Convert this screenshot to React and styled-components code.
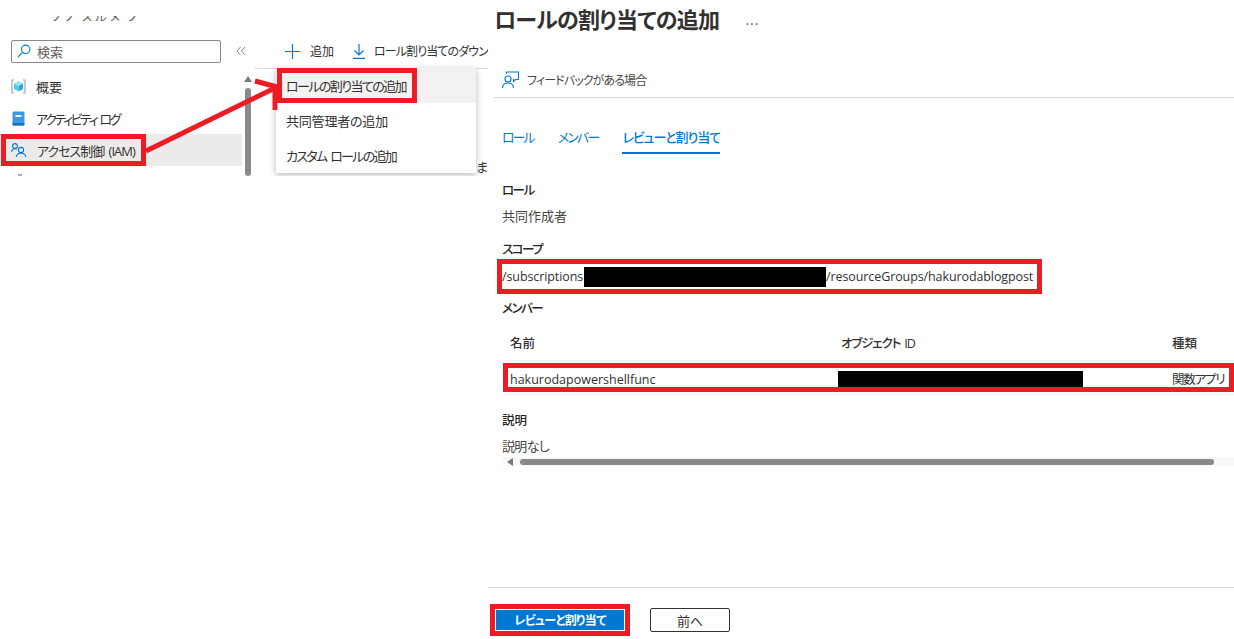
import React from 'react';
import styled, { createGlobalStyle, css } from 'styled-components';

const RED = '#ed1c24';
const BLUE = '#0078d4';

const GlobalStyle = createGlobalStyle`
  html, body {
    margin: 0;
    padding: 0;
    background: #fff;
  }
  body {
    font-family: "Open Sans", "Noto Sans CJK JP", sans-serif;
    font-size: 13px;
    color: #323130;
    font-feature-settings: "palt";
  }
`;

const marked = css`
  ${(p) => p.$marked && `outline: 5px solid ${RED};`}
`;

// the original UI font has narrow kana, so kana heavy labels get squeezed
const tracked = css`
  letter-spacing: ${(p) => p.$ls || 0}px;
  word-spacing: 2px;
`;

const Page = styled.div`
  position: relative;
  display: flex;
  width: 1234px;
  height: 639px;
  overflow: hidden;
  background: #fff;
`;

/* left blade, only its top is visible */
const LeftPane = styled.div`
  position: relative;
  display: flex;
  flex: 0 0 488px;
  height: 176px;
  overflow: hidden;
`;

const Sidebar = styled.div`
  flex: 0 0 254px;
`;

const ClippedTitle = styled.div`
  height: 5px;
  margin: 16px 0 0 50px;
  overflow: hidden;
  color: #605e5c;
  line-height: 5px;
  font-size: 13px;
  white-space: nowrap;

  span {
    display: block;
    margin-top: -9px;
    line-height: 18px;
    letter-spacing: 2px;
  }
`;

const SearchRow = styled.div`
  display: flex;
  align-items: center;
  height: 22px;
  margin: 19px 0 8px 11px;
`;

const SearchBox = styled.div`
  display: flex;
  align-items: center;
  gap: 6px;
  box-sizing: border-box;
  width: 210px;
  height: 23px;
  padding-left: 5px;
  border: 1px solid #8a8886;
  border-radius: 2px;
  color: #605e5c;
`;

const Collapse = styled.span`
  display: flex;
  margin-left: 15px;
`;

const NavArea = styled.div`
  display: flex;
  height: 106px;
  overflow: hidden;
`;

const NavList = styled.div`
  flex: 0 0 242px;
`;

const NavRow = styled.div`
  display: flex;
  align-items: center;
  height: 32px;
  background: ${(p) => (p.$active ? '#edebe9' : 'transparent')};
`;

const NavInner = styled.div`
  display: flex;
  align-items: center;
  gap: 10px;
  height: 22px;
  margin-left: 6px;
  padding: 0 6px 0 5px;
  ${marked}
`;

const NavText = styled.span`
  ${tracked}
`;

const NavStub = styled.div`
  width: 4px;
  height: 2px;
  margin: 8px 0 0 18px;
  background: #b4a0e0;
`;

const ScrollTrack = styled.div`
  display: flex;
  flex-direction: column;
  align-items: center;
  flex: 0 0 12px;
  padding-top: 6px;
`;

const ScrollUp = styled.div`
  width: 0;
  height: 0;
  border-left: 4px solid transparent;
  border-right: 4px solid transparent;
  border-bottom: 6px solid #7a7a7a;
`;

const ScrollThumb = styled.div`
  width: 6px;
  height: 100px;
  margin-top: 6px;
  border-radius: 3px;
  background: #8a8a8a;
`;

const Main = styled.div`
  position: relative;
  flex: 1;
  min-width: 0;
  overflow: hidden;
`;

const Toolbar = styled.div`
  display: flex;
  align-items: center;
  height: 22px;
  margin-top: 40px;
  padding-left: 31px;
  white-space: nowrap;
`;

const ToolItem = styled.div`
  display: flex;
  align-items: center;
  gap: ${(p) => p.$gap || 9}px;
  margin-right: 19px;
  font-size: 12px;
  ${tracked}
`;

const MainBody = styled.div`
  height: 108px;
  margin-top: 6px;
  padding: 88px 0 0 222px;
  border-top: 1px solid #e1dfdd;
  white-space: nowrap;
`;

const Menu = styled.div`
  position: absolute;
  top: 68px;
  left: 22px;
  width: 200px;
  background: #fff;
  box-shadow: 0 2px 7px rgba(0, 0, 0, 0.28);
`;

const MenuItem = styled.div`
  display: flex;
  align-items: center;
  height: 35px;
  padding-left: 6px;
  background: ${(p) => (p.$active ? '#f3f2f1' : '#fff')};
`;

const MenuLabel = styled.span`
  display: flex;
  align-items: center;
  height: 25px;
  padding: 0 6px 0 4px;
  font-size: 13px;
  ${tracked}
  ${marked}
`;

/* right blade */
const RightPane = styled.div`
  display: flex;
  flex-direction: column;
  flex: 1;
  min-width: 0;
  height: 639px;
`;

const TitleRow = styled.div`
  display: flex;
  align-items: center;
  height: 24px;
  margin: 7px 0 0 6px;
`;

const Title = styled.h1`
  margin: 0;
  font-size: 22px;
  font-weight: 600;
  line-height: 24px;
  letter-spacing: -0.7px;
`;

const More = styled.span`
  margin-left: 26px;
  color: #605e5c;
  font-size: 14px;
  letter-spacing: 1px;
`;

const Feedback = styled.div`
  display: flex;
  align-items: center;
  gap: 8px;
  height: 34px;
  margin: 32px 0 0 6px;
  padding-left: 8px;
  border-bottom: 1px solid #d6d6d6;
  font-size: 12px;
  letter-spacing: -0.9px;
  color: #484644;
`;

const Tabs = styled.div`
  display: flex;
  gap: 24px;
  margin: 26px 0 0 14px;
`;

const Tab = styled.div`
  height: 28px;
  line-height: 26px;
  font-size: 13px;
  color: ${BLUE};
  ${tracked}
  ${(p) => p.$active && `border-bottom: 2px solid ${BLUE}; font-weight: 500;`}
`;

const Content = styled.div`
  margin: 25px 0 0 14px;
`;

const Label = styled.div`
  height: 20px;
  margin-top: ${(p) => p.$top || 0}px;
  line-height: 24px;
  font-size: 12.5px;
  font-weight: 500;
  color: #252423;
  ${tracked}
`;

const Value = styled.div`
  height: 20px;
  margin-top: ${(p) => p.$top || 0}px;
  line-height: 21px;
  font-size: 13px;
  color: #484644;
  ${tracked}
`;

const ScopeRow = styled.div`
  display: flex;
  align-items: center;
  width: 535px;
  height: 25px;
  margin-top: 6px;
  font-size: 12.5px;
  letter-spacing: -0.1px;
  white-space: nowrap;
  ${marked}
`;

const Redacted = styled.span`
  display: inline-block;
  flex: none;
  width: ${(p) => p.$w}px;
  height: ${(p) => p.$h}px;
  margin-left: ${(p) => p.$left || 0}px;
  background: #000;
`;

const TableHead = styled.div`
  display: grid;
  grid-template-columns: 331px 331px 1fr;
  align-items: center;
  box-sizing: border-box;
  height: 44px;
  padding: 7px 0 0 8px;
  font-size: 12.5px;
  font-weight: 500;
  white-space: nowrap;
  border-bottom: 1px solid #eeeeee;
`;

const HeadCell = styled.span`
  ${tracked}
`;

const TableBody = styled.div`
  display: flex;
  align-items: center;
  height: 33px;
  border-bottom: 1px solid #eeeeee;
`;

const BodyCells = styled.div`
  display: grid;
  grid-template-columns: 328px 334px 1fr;
  align-items: center;
  box-sizing: border-box;
  width: 721px;
  height: 19px;
  margin: 0 0 0 6px;
  padding-left: 2px;
  font-size: 12.5px;
  line-height: 23px;
  white-space: nowrap;
  ${marked}
`;

const HScroll = styled.div`
  display: flex;
  align-items: center;
  gap: 7px;
  height: 9px;
  margin-top: 1px;
  padding-left: 5px;
  background: #f8f8f8;
`;

const HArrow = styled.div`
  width: 0;
  height: 0;
  border-top: 4px solid transparent;
  border-bottom: 4px solid transparent;
  border-right: 6px solid #7a7a7a;
`;

const HThumb = styled.div`
  width: 694px;
  height: 6px;
  border-radius: 3px;
  background: #8a8a8a;
`;

const Footer = styled.div`
  display: flex;
  align-items: center;
  gap: 25px;
  box-sizing: border-box;
  height: 52px;
  margin-top: auto;
  padding: 13px 0 0 7px;
  border-top: 1px solid #dedede;
`;

const PrimaryButton = styled.button`
  width: 130px;
  height: 22px;
  padding: 0;
  border: 1px solid #fff;
  background: ${BLUE};
  color: #fff;
  font: 600 12px "Open Sans", "Noto Sans CJK JP", sans-serif;
  font-feature-settings: "palt";
  letter-spacing: -0.7px;
  ${marked}
`;

const SecondaryButton = styled.button`
  width: 80px;
  height: 24px;
  padding: 0;
  border: 1px solid #323130;
  border-radius: 2px;
  background: #fff;
  color: #323130;
  font: 400 13px "Open Sans", "Noto Sans CJK JP", sans-serif;
`;

const ArrowLayer = styled.svg`
  position: absolute;
  top: 0;
  left: 0;
  pointer-events: none;
`;

const SearchIcon = () => (
  <svg width="14" height="14" viewBox="0 0 14 14" fill="none" stroke={BLUE} strokeWidth="1.1">
    <circle cx="8.7" cy="5.3" r="4.2" />
    <path d="M5.6 8.4 1 13" />
  </svg>
);

const CollapseIcon = () => (
  <svg width="10" height="10" viewBox="0 0 10 10" fill="none" stroke="#8a8886" strokeWidth="1">
    <path d="M4.500 1 1 5l3.500 4M9 1 5.500 5 9 9" />
  </svg>
);

const CubeIcon = () => (
  <svg width="15" height="15" viewBox="0 0 15 15">
    <path d="M3 1H1v13h2M12 1h2v13h-2" fill="none" stroke="#a8a8a8" strokeWidth="1.2" />
    <path d="M7.5 2 12 4.5 7.5 7 3 4.5z" fill="#8fe6f7" />
    <path d="M3 4.5 7.5 7v5.5L3 10z" fill="#50c8ee" />
    <path d="M12 4.5 7.5 7v5.5L12 10z" fill="#2aa5dd" />
  </svg>
);

const LogIcon = () => (
  <svg width="15" height="15" viewBox="0 0 15 15">
    <rect x="1.5" y="0.5" width="12" height="14" rx="1.5" fill="#3b9ae1" />
    <rect x="1.5" y="12" width="12" height="2.5" rx="1" fill="#1a6fb8" />
    <rect x="4.5" y="4" width="6" height="2" fill="#e6f2fb" />
  </svg>
);

const PeopleIcon = () => (
  <svg width="16" height="16" viewBox="0 0 16 16" fill="none" stroke={BLUE} strokeWidth="1.1">
    <circle cx="4" cy="4" r="2.4" />
    <path d="M0.6 10c.3-2.2 1.6-3.3 3.4-3.3 .7 0 1.3.2 1.8.5" />
    <circle cx="10" cy="8" r="2.6" />
    <path d="M5.2 15c.3-2.4 2-3.8 4.8-3.8s4.500 1.400 4.800 3.800" />
  </svg>
);

const PlusIcon = () => (
  <svg width="15" height="15" viewBox="0 0 15 15" stroke={BLUE} strokeWidth="1.2">
    <path d="M7.500 0v15M0 7.500h15" />
  </svg>
);

const DownloadIcon = () => (
  <svg width="12" height="15" viewBox="0 0 12 15" fill="none" stroke={BLUE} strokeWidth="1.200">
    <path d="M6 0v11M1.500 6.500 6 11l4.500-4.500M0 14.400h12" />
  </svg>
);

const FeedbackIcon = () => (
  <svg width="17" height="18" viewBox="0 0 17 18" fill="none" stroke={BLUE} strokeWidth="1.100">
    <path d="M4.500 3V1h12v7.500h-3l-2 2V8" />
    <circle cx="6" cy="8" r="3" />
    <path d="M0.500 17c.2-3.200 2.200-5 5.500-5s5.300 1.800 5.500 5" />
  </svg>
);

const navItems = [
  { label: '概要', icon: <CubeIcon /> },
  { label: 'アクティビティ ログ', icon: <LogIcon />, ls: -2.4 },
  { label: 'アクセス制御 (IAM)', icon: <PeopleIcon />, ls: -1, active: true },
];

const App = () => {
  return (
    <Page>
      <GlobalStyle />
      <LeftPane>
        <Sidebar>
          <ClippedTitle>
            <span>ソソ スルメ ノ</span>
          </ClippedTitle>
          <SearchRow>
            <SearchBox>
              <SearchIcon />
              検索
            </SearchBox>
            <Collapse>
              <CollapseIcon />
            </Collapse>
          </SearchRow>
          <NavArea>
            <NavList>
              {navItems.map((item) => (
                <NavRow key={item.label} $active={item.active}>
                  <NavInner $marked={item.active}>
                    {item.icon}
                    <NavText $ls={item.ls}>{item.label}</NavText>
                  </NavInner>
                </NavRow>
              ))}
              <NavStub />
            </NavList>
            <ScrollTrack>
              <ScrollUp />
              <ScrollThumb />
            </ScrollTrack>
          </NavArea>
        </Sidebar>
        <Main>
          <Toolbar>
            <ToolItem $gap={10}>
              <PlusIcon />
              追加
            </ToolItem>
            <ToolItem $ls={-0.9}>
              <DownloadIcon />
              ロール割り当てのダウンロード
            </ToolItem>
          </Toolbar>
          <MainBody>ます</MainBody>
          <Menu>
            <MenuItem $active>
              <MenuLabel $marked $ls={-1.6}>ロールの割り当ての追加</MenuLabel>
            </MenuItem>
            <MenuItem>
              <MenuLabel $ls={-0.2}>共同管理者の追加</MenuLabel>
            </MenuItem>
            <MenuItem>
              <MenuLabel $ls={-1.7}>カスタム ロールの追加</MenuLabel>
            </MenuItem>
          </Menu>
        </Main>
      </LeftPane>

      <RightPane>
        <TitleRow>
          <Title>ロールの割り当ての追加</Title>
          <More>...</More>
        </TitleRow>
        <Feedback>
          <FeedbackIcon />
          フィードバックがある場合
        </Feedback>
        <Tabs>
          <Tab $ls={-2}>ロール</Tab>
          <Tab $ls={-1.8}>メンバー</Tab>
          <Tab $active $ls={-1.1}>レビューと割り当て</Tab>
        </Tabs>
        <Content>
          <Label $ls={-1.5}>ロール</Label>
          <Value $top={7}>共同作成者</Value>
          <Label $top={12} $ls={-1.5}>スコープ</Label>
          <ScopeRow $marked>
            /subscriptions
            <Redacted $left={1} $w={242} $h={20} />
            /resourceGroups/hakurodablogpost
          </ScopeRow>
          <Label $top={8} $ls={-1.5}>メンバー</Label>
          <TableHead>
            <span>名前</span>
            <HeadCell $ls={-1.1}>オブジェクト ID</HeadCell>
            <span>種類</span>
          </TableHead>
          <TableBody>
            <BodyCells $marked>
              <span>hakurodapowershellfunc</span>
              <Redacted $w={245} $h={18} />
              <HeadCell $ls={-1.2}>関数アプリ</HeadCell>
            </BodyCells>
          </TableBody>
          <Label $top={14}>説明</Label>
          <Value $top={7} $ls={-0.7}>説明なし</Value>
          <HScroll>
            <HArrow />
            <HThumb />
          </HScroll>
        </Content>
        <Footer>
          <PrimaryButton $marked>レビューと割り当て</PrimaryButton>
          <SecondaryButton>前へ</SecondaryButton>
        </Footer>
      </RightPane>

      <ArrowLayer width="1234" height="639" fill="none" stroke={RED} strokeWidth="5">
        <path d="M146 151 277 87" />
        <path d="M255 81 277 87" />
        <path d="M275 87v23" />
      </ArrowLayer>
    </Page>
  );
};

export default App;
